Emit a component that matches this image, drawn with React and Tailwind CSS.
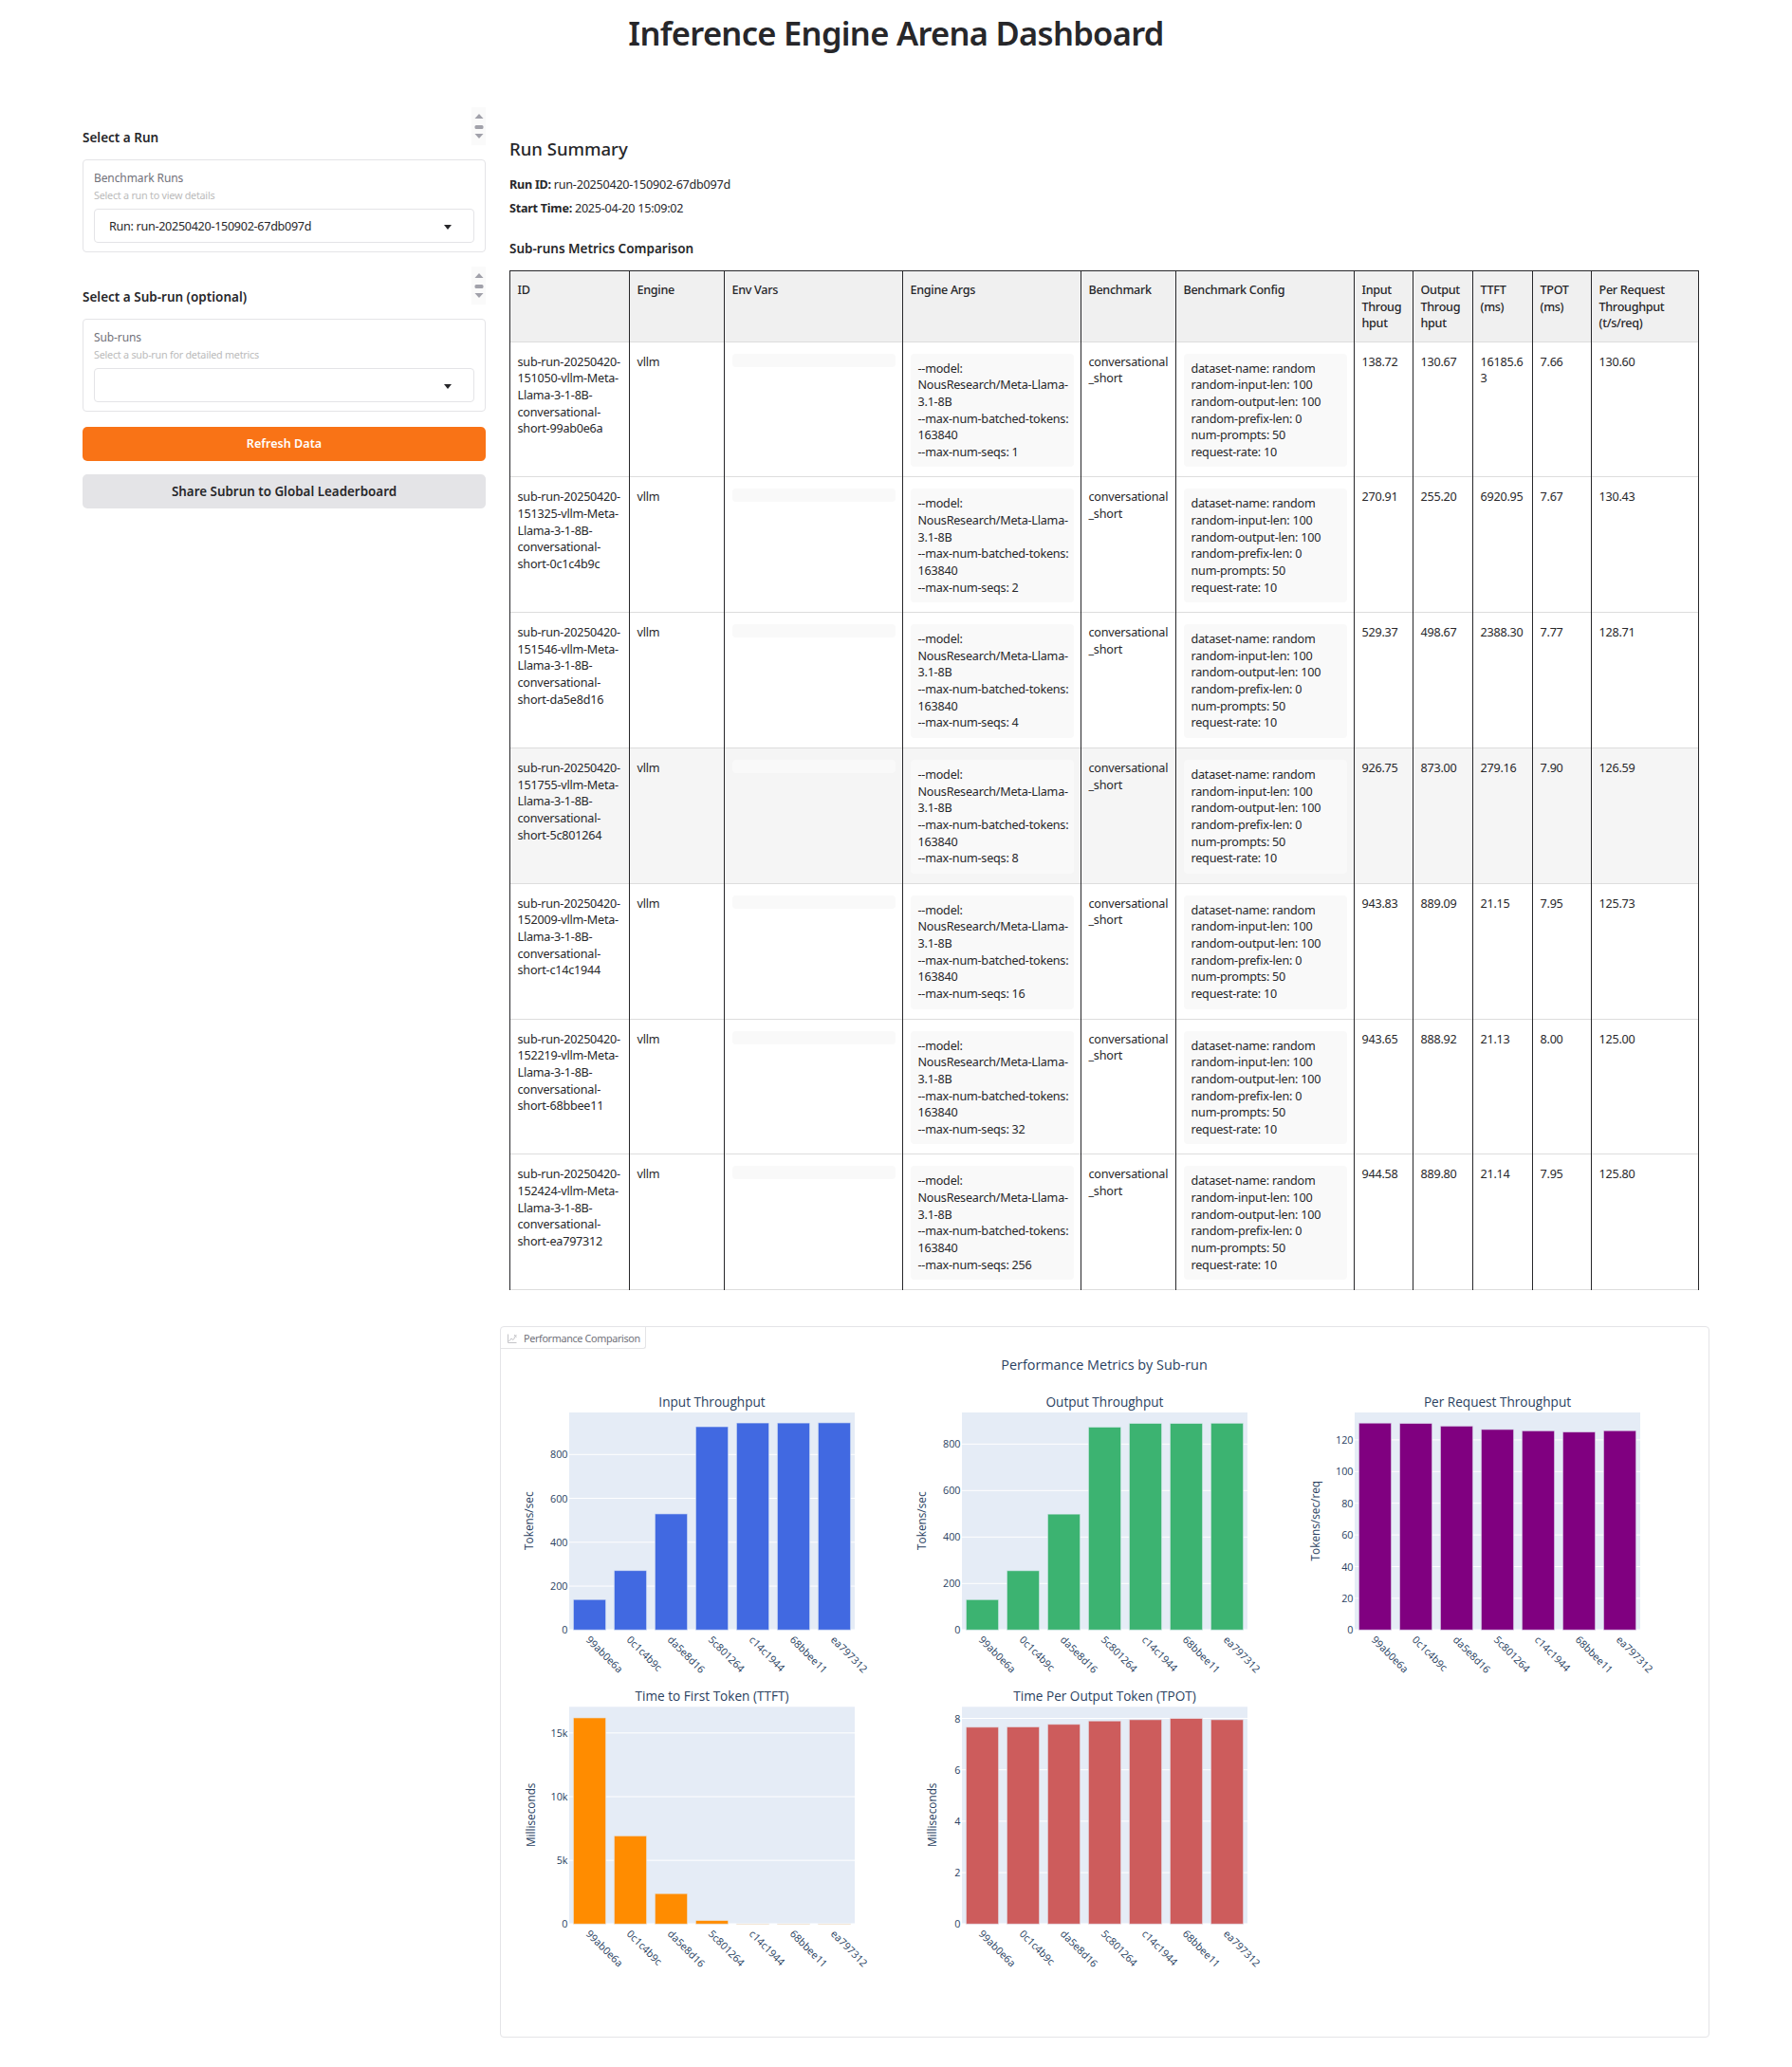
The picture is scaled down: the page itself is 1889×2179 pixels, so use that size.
import React from 'react';

const seqs = [1, 2, 4, 8, 16, 32, 256];
const config = 'dataset-name: random\nrandom-input-len: 100\nrandom-output-len: 100\nrandom-prefix-len: 0\nnum-prompts: 50\nrequest-rate: 10';

const subRuns = [
  { id: 'sub-run-20250420-\n151050-vllm-Meta-\nLlama-3-1-8B-\nconversational-\nshort-99ab0e6a', input: '138.72', output: '130.67', ttft: '16185.6\n3', tpot: '7.66', perReq: '130.60' },
  { id: 'sub-run-20250420-\n151325-vllm-Meta-\nLlama-3-1-8B-\nconversational-\nshort-0c1c4b9c', input: '270.91', output: '255.20', ttft: '6920.95', tpot: '7.67', perReq: '130.43' },
  { id: 'sub-run-20250420-\n151546-vllm-Meta-\nLlama-3-1-8B-\nconversational-\nshort-da5e8d16', input: '529.37', output: '498.67', ttft: '2388.30', tpot: '7.77', perReq: '128.71' },
  { id: 'sub-run-20250420-\n151755-vllm-Meta-\nLlama-3-1-8B-\nconversational-\nshort-5c801264', input: '926.75', output: '873.00', ttft: '279.16', tpot: '7.90', perReq: '126.59', hover: true },
  { id: 'sub-run-20250420-\n152009-vllm-Meta-\nLlama-3-1-8B-\nconversational-\nshort-c14c1944', input: '943.83', output: '889.09', ttft: '21.15', tpot: '7.95', perReq: '125.73' },
  { id: 'sub-run-20250420-\n152219-vllm-Meta-\nLlama-3-1-8B-\nconversational-\nshort-68bbee11', input: '943.65', output: '888.92', ttft: '21.13', tpot: '8.00', perReq: '125.00' },
  { id: 'sub-run-20250420-\n152424-vllm-Meta-\nLlama-3-1-8B-\nconversational-\nshort-ea797312', input: '944.58', output: '889.80', ttft: '21.14', tpot: '7.95', perReq: '125.80' },
];

const shortIds = ['99ab0e6a', '0c1c4b9c', 'da5e8d16', '5c801264', 'c14c1944', '68bbee11', 'ea797312'];

// coordinates below are page pixels, the svg viewBox starts at the card's corner
const charts = [
  { title: 'Input Throughput', yTitle: 'Tokens/sec', color: '#4169e1', x: 600, top: 1489, base: 1718.3, scale: 0.23125, axisX: 559, ticks: [[0, '0'], [200, '200'], [400, '400'], [600, '600'], [800, '800']], values: [138.72, 270.91, 529.37, 926.75, 943.83, 943.65, 944.58] },
  { title: 'Output Throughput', yTitle: 'Tokens/sec', color: '#3cb371', x: 1014, top: 1489, base: 1718.3, scale: 0.245, axisX: 973, ticks: [[0, '0'], [200, '200'], [400, '400'], [600, '600'], [800, '800']], values: [130.67, 255.2, 498.67, 873, 889.09, 888.92, 889.8] },
  { title: 'Per Request Throughput', yTitle: 'Tokens/sec/req', color: '#800080', x: 1428, top: 1489, base: 1718.3, scale: 1.67, axisX: 1388, ticks: [[0, '0'], [20, '20'], [40, '40'], [60, '60'], [80, '80'], [100, '100'], [120, '120']], values: [130.6, 130.43, 128.71, 126.59, 125.73, 125, 125.8] },
  { title: 'Time to First Token (TTFT)', yTitle: 'Milliseconds', color: '#ff8c00', x: 600, top: 1799.3, base: 2028.3, scale: 0.01343, axisX: 561, ticks: [[0, '0'], [5000, '5k'], [10000, '10k'], [15000, '15k']], values: [16185.63, 6920.95, 2388.3, 279.16, 21.15, 21.13, 21.14] },
  { title: 'Time Per Output Token (TPOT)', yTitle: 'Milliseconds', color: '#cd5c5c', x: 1014, top: 1799.3, base: 2028.3, scale: 27.1, axisX: 984, ticks: [[0, '0'], [2, '2'], [4, '4'], [6, '6'], [8, '8']], values: [7.66, 7.67, 7.77, 7.9, 7.95, 8, 7.95] },
];

function BarChart({ chart }) {
  const { title, yTitle, color, x, top, base, scale, axisX, ticks, values } = chart;
  const midY = (top + base) / 2 - 0.5;
  return (
    <g>
      <rect x={x} y={top} width={301} height={base - top} fill="#E5ECF6" />
      {ticks.map(([value, label]) => (
        <g key={label}>
          <line x1={x} x2={x + 301} y1={base - value * scale} y2={base - value * scale} stroke="#fff" strokeWidth={value === 0 ? 1.5 : 1} />
          <text x={x - 1.5} y={base - value * scale + 4} textAnchor="end" fontSize="10.8" fill="#2a3f5f">{label}</text>
        </g>
      ))}
      {values.map((value, i) => {
        const h = value * scale;
        return <rect key={shortIds[i]} x={x + 4.4 + i * 43} y={base - h} width={34.2} height={h} fill={color} stroke="#E5ECF6" strokeWidth="1" strokeOpacity="0.6" />;
      })}
      {shortIds.map((id, i) => {
        const tx = x + 17 + i * 43;
        return (
          <text key={id} x={tx} y={base + 11} transform={`rotate(45 ${tx} ${base + 11})`} fontSize="10.8" fill="#2a3f5f">{id}</text>
        );
      })}
      <text x={x + 150.5} y={top - 6} textAnchor="middle" fontSize="13.6" fill="#2a3f5f">{title}</text>
      <text x={axisX} y={midY} transform={`rotate(-90 ${axisX} ${midY})`} textAnchor="middle" dominantBaseline="middle" fontSize="11.8" fill="#2a3f5f">{yTitle}</text>
    </g>
  );
}

function SortArrows() {
  return (
    <div className="flex h-[40px] w-[15px] flex-col items-center justify-center bg-[#fafafa]">
      <svg width="10" height="26" viewBox="0 0 10 26" fill="#a1a1aa">
        <path d="M5 0 L9.5 5 L0.5 5 Z" />
        <rect x="0.5" y="12" width="9" height="4" rx="1.5" />
        <path d="M0.5 21 L9.5 21 L5 26 Z" />
      </svg>
    </div>
  );
}

function Dropdown({ heading, label, info, value }) {
  return (
    <div>
      <div className="flex h-[40px] items-end justify-between">
        <h3 className="mb-[-1px] text-[13.5px] leading-[18px] font-semibold text-[#27272a]">{heading}</h3>
        <SortArrows />
      </div>
      <div className="mt-[15px] h-[98px] rounded-[4px] border border-[#e4e4e7] px-[11px] pt-[10px]">
        <div className="text-[12px] leading-[18px] tracking-[-0.1px] text-[#71717a]">{label}</div>
        <div className="text-[10.8px] leading-[18px] tracking-[-0.25px] text-[#bbbbbb]">{info}</div>
        <div className="mt-[5px] flex h-[36px] items-center justify-between rounded-[4px] border border-[#e4e4e7] pl-[15px] pr-[23px] pt-[2px] text-[12.6px] tracking-[-0.3px] text-[#27272a]">
          <span>{value}</span>
          <svg width="8" height="5" viewBox="0 0 8 5" fill="#27272a"><path d="M0 0 L8 0 L4 5 Z" /></svg>
        </div>
      </div>
    </div>
  );
}

export default function App() {
  return (
    <div className="min-h-[2179px] bg-white font-['Noto_Sans',sans-serif] text-[#27272a]">
      <h1 className="h-[70px] text-center text-[34.5px] leading-[70px] font-semibold tracking-[-0.7px]">Inference Engine Arena Dashboard</h1>

      <div className="mt-[43px] flex pl-[87px]">
        <aside className="w-[425px]">
          <Dropdown heading="Select a Run" label="Benchmark Runs" info="Select a run to view details" value="Run: run-20250420-150902-67db097d" />
          <div className="mt-[15px]">
            <Dropdown heading="Select a Sub-run (optional)" label="Sub-runs" info="Select a sub-run for detailed metrics" value="" />
          </div>
          <button className="mt-[16px] h-[36px] w-full rounded-[5px] bg-[#f97316] pt-[1px] text-[12.6px] font-semibold text-white">Refresh Data</button>
          <button className="mt-[14px] h-[36px] w-full rounded-[5px] bg-[#e4e4e7] pt-[1px] text-[13.4px] font-semibold text-[#27272a]">Share Subrun to Global Leaderboard</button>
        </aside>

        <main className="ml-[25px] w-[1253px]">
          <h2 className="mt-[31px] text-[18.5px] leading-[26px] font-medium">Run Summary</h2>
          <p className="mt-[16px] text-[12.6px] leading-[18px] tracking-[-0.25px]"><strong className="font-bold">Run ID:</strong> run-20250420-150902-67db097d</p>
          <p className="mt-[7px] text-[12.6px] leading-[18px] tracking-[-0.25px]"><strong className="font-bold">Start Time:</strong> 2025-04-20 15:09:02</p>
          <h3 className="mt-[24px] text-[13.5px] leading-[18px] font-semibold">Sub-runs Metrics Comparison</h3>

          <table className="mt-[14px] w-[1253px] table-fixed border-collapse border-x border-t border-[#27272a] text-left text-[12.6px] leading-[17.64px] tracking-[-0.22px]">
            <colgroup>
              <col className="w-[126px]" />
              <col className="w-[100px]" />
              <col className="w-[188px]" />
              <col className="w-[188px]" />
              <col className="w-[100px]" />
              <col className="w-[188px]" />
              <col className="w-[62px]" />
              <col className="w-[63px]" />
              <col className="w-[63px]" />
              <col className="w-[62px]" />
              <col className="w-[113px]" />
            </colgroup>
            <thead>
              <tr className="h-[74.6px] border-b border-[#dddddd] bg-[#f0f0f0] align-top">
                {['ID', 'Engine', 'Env Vars', 'Engine Args', 'Benchmark', 'Benchmark Config', 'Input\nThroug\nhput', 'Output\nThroug\nhput', 'TTFT\n(ms)', 'TPOT\n(ms)', 'Per Request\nThroughput\n(t/s/req)'].map((name) => (
                  <th key={name} className="border-x border-[#27272a] px-[7.5px] pt-[11px] pb-[9px] font-medium tracking-[-0.3px] whitespace-pre">{name}</th>
                ))}
              </tr>
            </thead>
            <tbody>
              {subRuns.map((run, i) => {
                const cell = 'border-x border-[#27272a] px-[7.5px] pt-[12px] whitespace-pre';
                return (
                  <tr key={run.id} className={`h-[142.8px] border-b border-[#dddddd] align-top ${run.hover ? 'bg-[#f5f5f5]' : ''}`}>
                    <td className={cell}>{run.id}</td>
                    <td className={cell}>vllm</td>
                    <td className={cell}><div className="h-[14px] rounded-[4px] bg-[#f9f9f9]" /></td>
                    <td className={cell}>
                      <div className="rounded-[4px] bg-[#f9f9f9] px-[8px] py-[7px]">{`--model:\nNousResearch/Meta-Llama-\n3.1-8B\n--max-num-batched-tokens:\n163840\n--max-num-seqs: ${seqs[i]}`}</div>
                    </td>
                    <td className={cell}>{'conversational\n_short'}</td>
                    <td className={cell}><div className="rounded-[4px] bg-[#f9f9f9] px-[8px] py-[7px]">{config}</div></td>
                    <td className={cell}>{run.input}</td>
                    <td className={cell}>{run.output}</td>
                    <td className={cell}>{run.ttft}</td>
                    <td className={cell}>{run.tpot}</td>
                    <td className={cell}>{run.perReq}</td>
                  </tr>
                );
              })}
            </tbody>
          </table>
        </main>
      </div>

      <section className="mt-[38px] ml-[527px] h-[750px] w-[1275px] rounded-[4px] border border-[#e4e4e7]">
        <div className="flex h-[23px] w-[153px] items-center gap-[7px] rounded-br-[3px] border-r border-b border-[#e4e4e7] pt-[1px] pl-[7px] text-[10.8px] tracking-[-0.35px] whitespace-nowrap text-[#71717a]">
          <svg width="10" height="10" viewBox="0 0 10 10" fill="none" stroke="#c4c4c8" strokeWidth="1">
            <path d="M0.5 0.5 V9.5 H9.5" />
            <path d="M1.5 8 L4 5 L6 6.5 L9 2" />
            <path d="M7 1 L9.5 3.5 M9.5 1 L7 3.5" />
          </svg>
          <span>Performance Comparison</span>
        </div>
        <svg width="1273" height="726" viewBox="528 1422 1273 726" className="block font-['Open_Sans',sans-serif]">
          <text x="1164" y="1444" textAnchor="middle" fontSize="14.4" fill="#2a3f5f">Performance Metrics by Sub-run</text>
          {charts.map((chart) => <BarChart key={chart.title} chart={chart} />)}
        </svg>
      </section>
    </div>
  );
}
